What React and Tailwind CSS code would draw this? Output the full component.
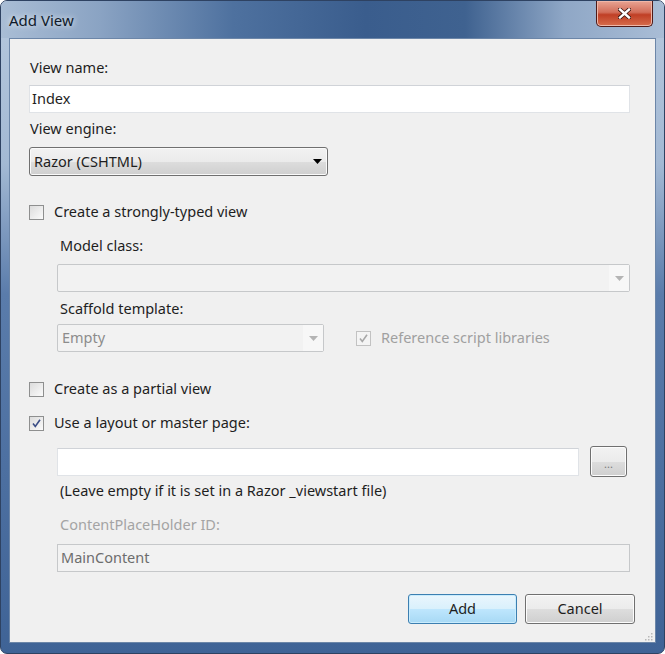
import React from "react";

const font = { fontFamily: '"Noto Sans", "Open Sans", sans-serif' };

const CheckBox = ({ checked, disabled }) => (
  <span
    className={`flex h-[15px] w-[15px] shrink-0 items-center justify-center border ${
      disabled
        ? "border-[#c2c2c2] bg-[#f4f4f4]"
        : "border-[#8e8f8f] bg-[linear-gradient(135deg,#dcdcdc,#fbfbfb)]"
    }`}
  >
    {checked && (
      <svg width="11" height="11" viewBox="0 0 11 11">
        <path
          d="M2 5.5 L4.3 8.5 L9 1.8"
          fill="none"
          stroke={disabled ? "#a8a8a8" : "#3a4d86"}
          strokeWidth="1.6"
        />
      </svg>
    )}
  </span>
);

const Arrow = ({ color }) => (
  <svg width="9" height="5" viewBox="0 0 9 5">
    <path d="M0 0 H9 L4.5 5 Z" fill={color} />
  </svg>
);

const DisabledCombo = ({ className, text }) => (
  <div
    className={`flex h-[28px] items-center rounded-[2px] border border-[#c6c8ca] bg-[#f2f2f2] ${className}`}
  >
    <span className="flex-1 pl-[4px] text-[#8c8c8c]">{text}</span>
    <span className="flex h-full w-[20px] items-center justify-center bg-[#f7f7f7]">
      <Arrow color="#b4b4b4" />
    </span>
  </div>
);

const WinButton = ({ children, isDefault, className }) => (
  <button
    className={`flex items-center justify-center rounded-[3px] border text-[#1e1e1e] ${
      isDefault
        ? "border-[#3c7fb1] bg-[linear-gradient(#eaf6fd_0%,#d9f0fc_50%,#bee6fd_51%,#a7d9f5_100%)] shadow-[inset_0_0_0_1px_#c9ecfd]"
        : "border-[#707070] bg-[linear-gradient(#f2f2f2_0%,#ebebeb_50%,#dddddd_51%,#cfcfcf_100%)] shadow-[inset_0_0_0_1px_#fcfcfc]"
    } ${className}`}
  >
    {children}
  </button>
);

export default function App() {
  return (
    <div
      className="flex h-[654px] w-[665px] flex-col overflow-hidden rounded-[7px] border border-[#2e4262] bg-[linear-gradient(180deg,#b6c8dd_0%,#a3b9d4_25%,#5a7cab_45%,#3f6396_100%)] text-[14.5px] text-[#1e1e1e]"
      style={font}
    >
      <div className="flex h-[37px] shrink-0 items-start bg-[linear-gradient(90deg,#a9bdd5_0%,#8aa3c3_15%,#4e719f_35%,#3a5d8d_55%,#3f6290_70%,#8fa7c6_85%,#a9bdd6_100%)]">
        <span className="pl-[8px] pt-[8px] text-[15px] text-[#0f1a2a] [text-shadow:0_0_6px_#ffffff]">
          Add View
        </span>
        <div className="ml-auto mr-[11px] flex h-[26px] w-[57px] items-center justify-center rounded-b-[5px] border border-t-0 border-[#4e1a18] bg-[linear-gradient(#e8a493_0%,#d26e5a_45%,#c03f25_55%,#d66d4d_100%)] shadow-[inset_0_0_0_1px_#efb7a8]">
          <svg width="13" height="11" viewBox="0 0 13 11">
            <path
              d="M2 1.5 L11 9.5 M11 1.5 L2 9.5"
              stroke="#3a1610"
              strokeWidth="4"
              strokeLinecap="square"
            />
            <path
              d="M2 1.5 L11 9.5 M11 1.5 L2 9.5"
              stroke="#ffffff"
              strokeWidth="2.4"
              strokeLinecap="square"
            />
          </svg>
        </div>
      </div>

      <div className="mx-[8px] mb-[10px] flex flex-1 flex-col border border-[#6c86a8] bg-[#f0f0f0] pl-[19px] pr-[25px]">
        <div className="mt-[19px] flex h-[20px] items-center pl-[1px]">View name:</div>
        <div className="mt-[7px] flex h-[28px] items-center border border-[#e0e3e7] border-t-[#d0d3d8] bg-white pl-[2px]">
          Index
        </div>

        <div className="mt-[6px] flex h-[20px] items-center pl-[1px]">View engine:</div>
        <div className="mt-[8px] flex h-[29px] w-[299px] items-center rounded-[3px] border border-[#707070] bg-[linear-gradient(#f2f2f2_0%,#ebebeb_50%,#dddddd_51%,#cfcfcf_100%)] shadow-[inset_0_0_0_1px_#fafafa]">
          <span className="flex-1 pl-[4px]">Razor (CSHTML)</span>
          <span className="pr-[5px]">
            <Arrow color="#000000" />
          </span>
        </div>

        <div className="mt-[26px] flex h-[20px] items-center gap-[10px]">
          <CheckBox />
          <span>Create a strongly-typed view</span>
        </div>

        <div className="ml-[28px] flex flex-col">
          <div className="mt-[14px] flex h-[20px] items-center pl-[3px]">Model class:</div>
          <DisabledCombo className="mt-[8px] bg-[#f0f0f0]" text="" />

          <div className="mt-[7px] flex h-[20px] items-center pl-[3px]">Scaffold template:</div>
          <div className="mt-[5px] flex h-[28px] items-center">
            <DisabledCombo className="w-[267px]" text="Empty" />
            <div className="ml-[32px] flex items-center gap-[10px] text-[#a0a0a0]">
              <CheckBox checked disabled />
              <span>Reference script libraries</span>
            </div>
          </div>
        </div>

        <div className="mt-[27px] flex h-[20px] items-center gap-[10px]">
          <CheckBox />
          <span>Create as a partial view</span>
        </div>
        <div className="mt-[14px] flex h-[20px] items-center gap-[10px]">
          <CheckBox checked />
          <span>Use a layout or master page:</span>
        </div>

        <div className="ml-[28px] flex flex-col">
          <div className="mt-[13px] flex h-[31px] items-center">
            <div className="h-[28px] w-[522px] border border-[#e0e3e7] border-t-[#d0d3d8] bg-white" />
            <WinButton className="ml-[11px] h-[31px] w-[37px] pt-[6px] text-[11px] text-[#7a7a7a]">
              ...
            </WinButton>
          </div>
          <div className="mt-[4px] flex h-[20px] items-center pl-[3px]">
            (Leave empty if it is set in a Razor _viewstart file)
          </div>
          <div className="mt-[14px] flex h-[20px] items-center pl-[3px] text-[#a4a4a4]">
            ContentPlaceHolder ID:
          </div>
          <div className="mt-[9px] flex h-[28px] items-center border border-[#c6c8ca] bg-[#f2f2f2] pl-[3px] text-[#6d6d6d]">
            MainContent
          </div>
        </div>

        <div className="-mr-[5px] mt-[22px] flex items-start justify-end gap-[8px]">
          <WinButton isDefault className="h-[30px] w-[109px]">
            Add
          </WinButton>
          <WinButton className="h-[30px] w-[110px]">Cancel</WinButton>
        </div>

        <div className="-mr-[23px] mt-auto mb-[1px] flex justify-end">
          <svg width="10" height="10" viewBox="0 0 10 10">
            {[
              [8, 2],
              [8, 5],
              [5, 5],
              [8, 8],
              [5, 8],
              [2, 8],
            ].map(([x, y]) => (
              <rect key={`${x}-${y}`} x={x} y={y} width="1.5" height="1.5" fill="#b8b8b8" />
            ))}
          </svg>
        </div>
      </div>
    </div>
  );
}
